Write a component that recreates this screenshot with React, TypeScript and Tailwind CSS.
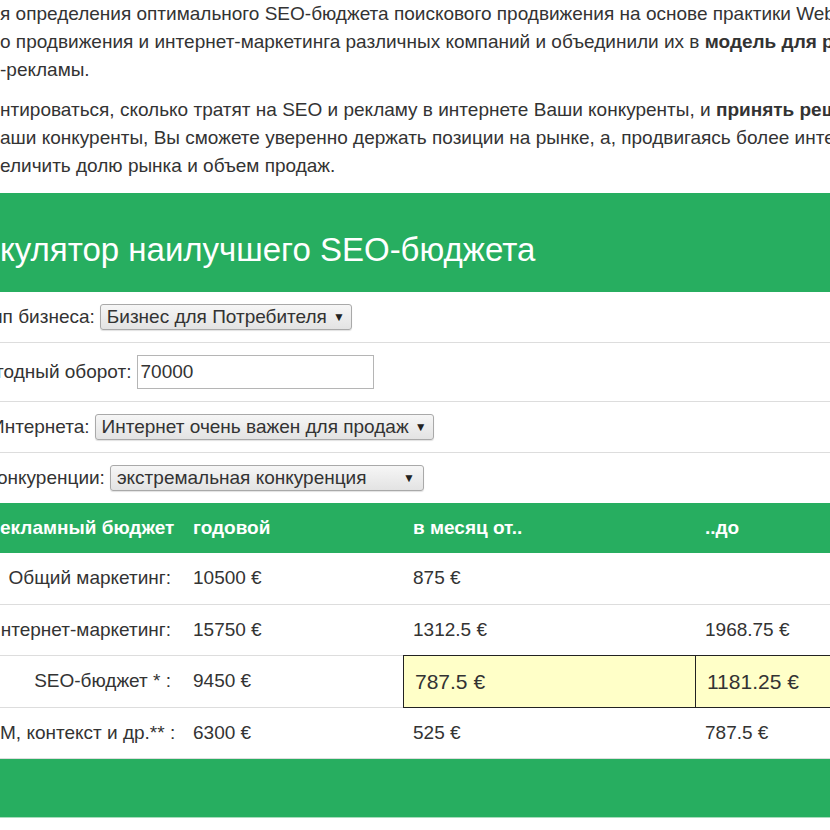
import React from "react";

const green = "bg-[#27ae60]";

function FakeSelect({ value, width }: { value: string; width: string }) {
  return (
    <div
      className={`flex items-center justify-between h-[26px] ${width} pl-[6px] pr-[8px] border border-[#a9a9a9] rounded-[3px] bg-gradient-to-b from-[#f6f6f6] to-[#e3e3e3] shadow-[0_1px_1px_rgba(0,0,0,0.12)] text-[#333]`}
    >
      <span className="whitespace-nowrap">{value}</span>
      <span className="text-[12px] text-[#222] ml-[6px]">▼</span>
    </div>
  );
}

function FormRow({
  label,
  shift,
  children,
  last,
}: {
  label: string;
  shift: string;
  children: React.ReactNode;
  last?: boolean;
}) {
  return (
    <div className={`flex items-center gap-[5px] py-3 leading-[26px] ${last ? "" : "border-b border-[#dddddd]"}`}>
      <span className={`whitespace-nowrap ${shift}`}>{label}</span>
      {children}
    </div>
  );
}

export default function App() {
  const rows = [
    { label: "Общий маркетинг:", year: "10500 €", from: "875 €", to: "" },
    { label: "нтернет-маркетинг:", year: "15750 €", from: "1312.5 €", to: "1968.75 €" },
  ];

  return (
    <div className="w-[830px] h-[830px] overflow-hidden bg-white text-[#333] text-[19px] font-['Liberation_Sans',Arial,sans-serif]">
      {/* intro text */}
      <div className="leading-[28px]">
        <p className="whitespace-nowrap">
          я определения оптимального SEO-бюджета поискового продвижения на основе практики WebSEO
          <br />
          о продвижения и интернет-маркетинга различных компаний и объединили их в <b>модель для расчёта</b>
          <br />
          -рекламы.
        </p>
        <p className="whitespace-nowrap mt-[12px]">
          нтироваться, сколько тратят на SEO и рекламу в интернете Ваши конкуренты, и <b>принять решение</b>
          <br />
          аши конкуренты, Вы сможете уверенно держать позиции на рынке, а, продвигаясь более интенсивно,
          <br />
          еличить долю рынка и объем продаж.
        </p>
      </div>

      {/* calculator */}
      <div className="mt-[13px]">
        <div className={`${green} h-[99px] pt-[39px] text-white text-[33px] leading-[36px] whitespace-nowrap`}>
          кулятор наилучшего SEO-бюджета
        </div>

        <div>
          <FormRow label="ип бизнеса:" shift="-ml-[8px]">
            <FakeSelect value="Бизнес для Потребителя" width="w-[252px]" />
          </FormRow>
          <FormRow label="годный оборот:" shift="-ml-[3px]">
            <div className="h-[34px] w-[237px] border border-[#b5b5b5] px-[3px] flex items-center bg-white">70000</div>
          </FormRow>
          <FormRow label="Интернета:" shift="-ml-[9px]">
            <FakeSelect value="Интернет очень важен для продаж" width="w-[339px]" />
          </FormRow>
          <FormRow label="онкуренции:" shift="-ml-[3px]" last>
            <FakeSelect value="экстремальная конкуренция" width="w-[314px]" />
          </FormRow>
        </div>

        <table className="border-separate border-spacing-0 table-fixed w-[1000px]">
          <colgroup>
            <col className="w-[183px]" />
            <col className="w-[220px]" />
            <col className="w-[292px]" />
            <col className="w-[305px]" />
          </colgroup>
          <thead>
            <tr className={`${green} text-white font-bold h-[50px]`}>
              <th className="text-right pr-[12px] font-bold whitespace-nowrap">екламный бюджет</th>
              <th className="text-left pl-[10px] font-bold">годовой</th>
              <th className="text-left pl-[10px] font-bold">в месяц от..</th>
              <th className="text-left pl-[10px] font-bold">..до</th>
            </tr>
          </thead>
          <tbody>
            {rows.map((r, i) => (
              <tr key={r.label} className="h-[51px]">
                <td className={`text-right pr-[12px] whitespace-nowrap ${i ? "border-t border-[#dddddd]" : ""}`}>{r.label}</td>
                <td className={`pl-[10px] ${i ? "border-t border-[#dddddd]" : ""}`}>{r.year}</td>
                <td className={`pl-[10px] ${i ? "border-t border-[#dddddd]" : ""}`}>{r.from}</td>
                <td className={`pl-[10px] ${i ? "border-t border-[#dddddd]" : ""}`}>{r.to}</td>
              </tr>
            ))}
            <tr className="h-[53px]">
              <td className="text-right pr-[12px] whitespace-nowrap border-y border-[#dddddd]">SEO-бюджет * :</td>
              <td className="pl-[10px] border-y border-[#dddddd]">9450 €</td>
              <td className="pl-[11px] bg-[#ffffc8] border-y border-l border-[#222] text-[21px]">787.5 €</td>
              <td className="pl-[11px] bg-[#ffffc8] border border-[#222] text-[21px]">1181.25 €</td>
            </tr>
            <tr className="h-[50px]">
              <td className="text-right pr-[12px] whitespace-nowrap">M, контекст и др.** :</td>
              <td className="pl-[10px]">6300 €</td>
              <td className="pl-[10px]">525 €</td>
              <td className="pl-[10px]">787.5 €</td>
            </tr>
          </tbody>
          <tfoot>
            <tr className={`${green} h-[60px]`}>
              <td colSpan={4} className="border-t border-[#dddddd] border-b border-b-[#a8dcbc]"></td>
            </tr>
          </tfoot>
        </table>
      </div>
    </div>
  );
}
